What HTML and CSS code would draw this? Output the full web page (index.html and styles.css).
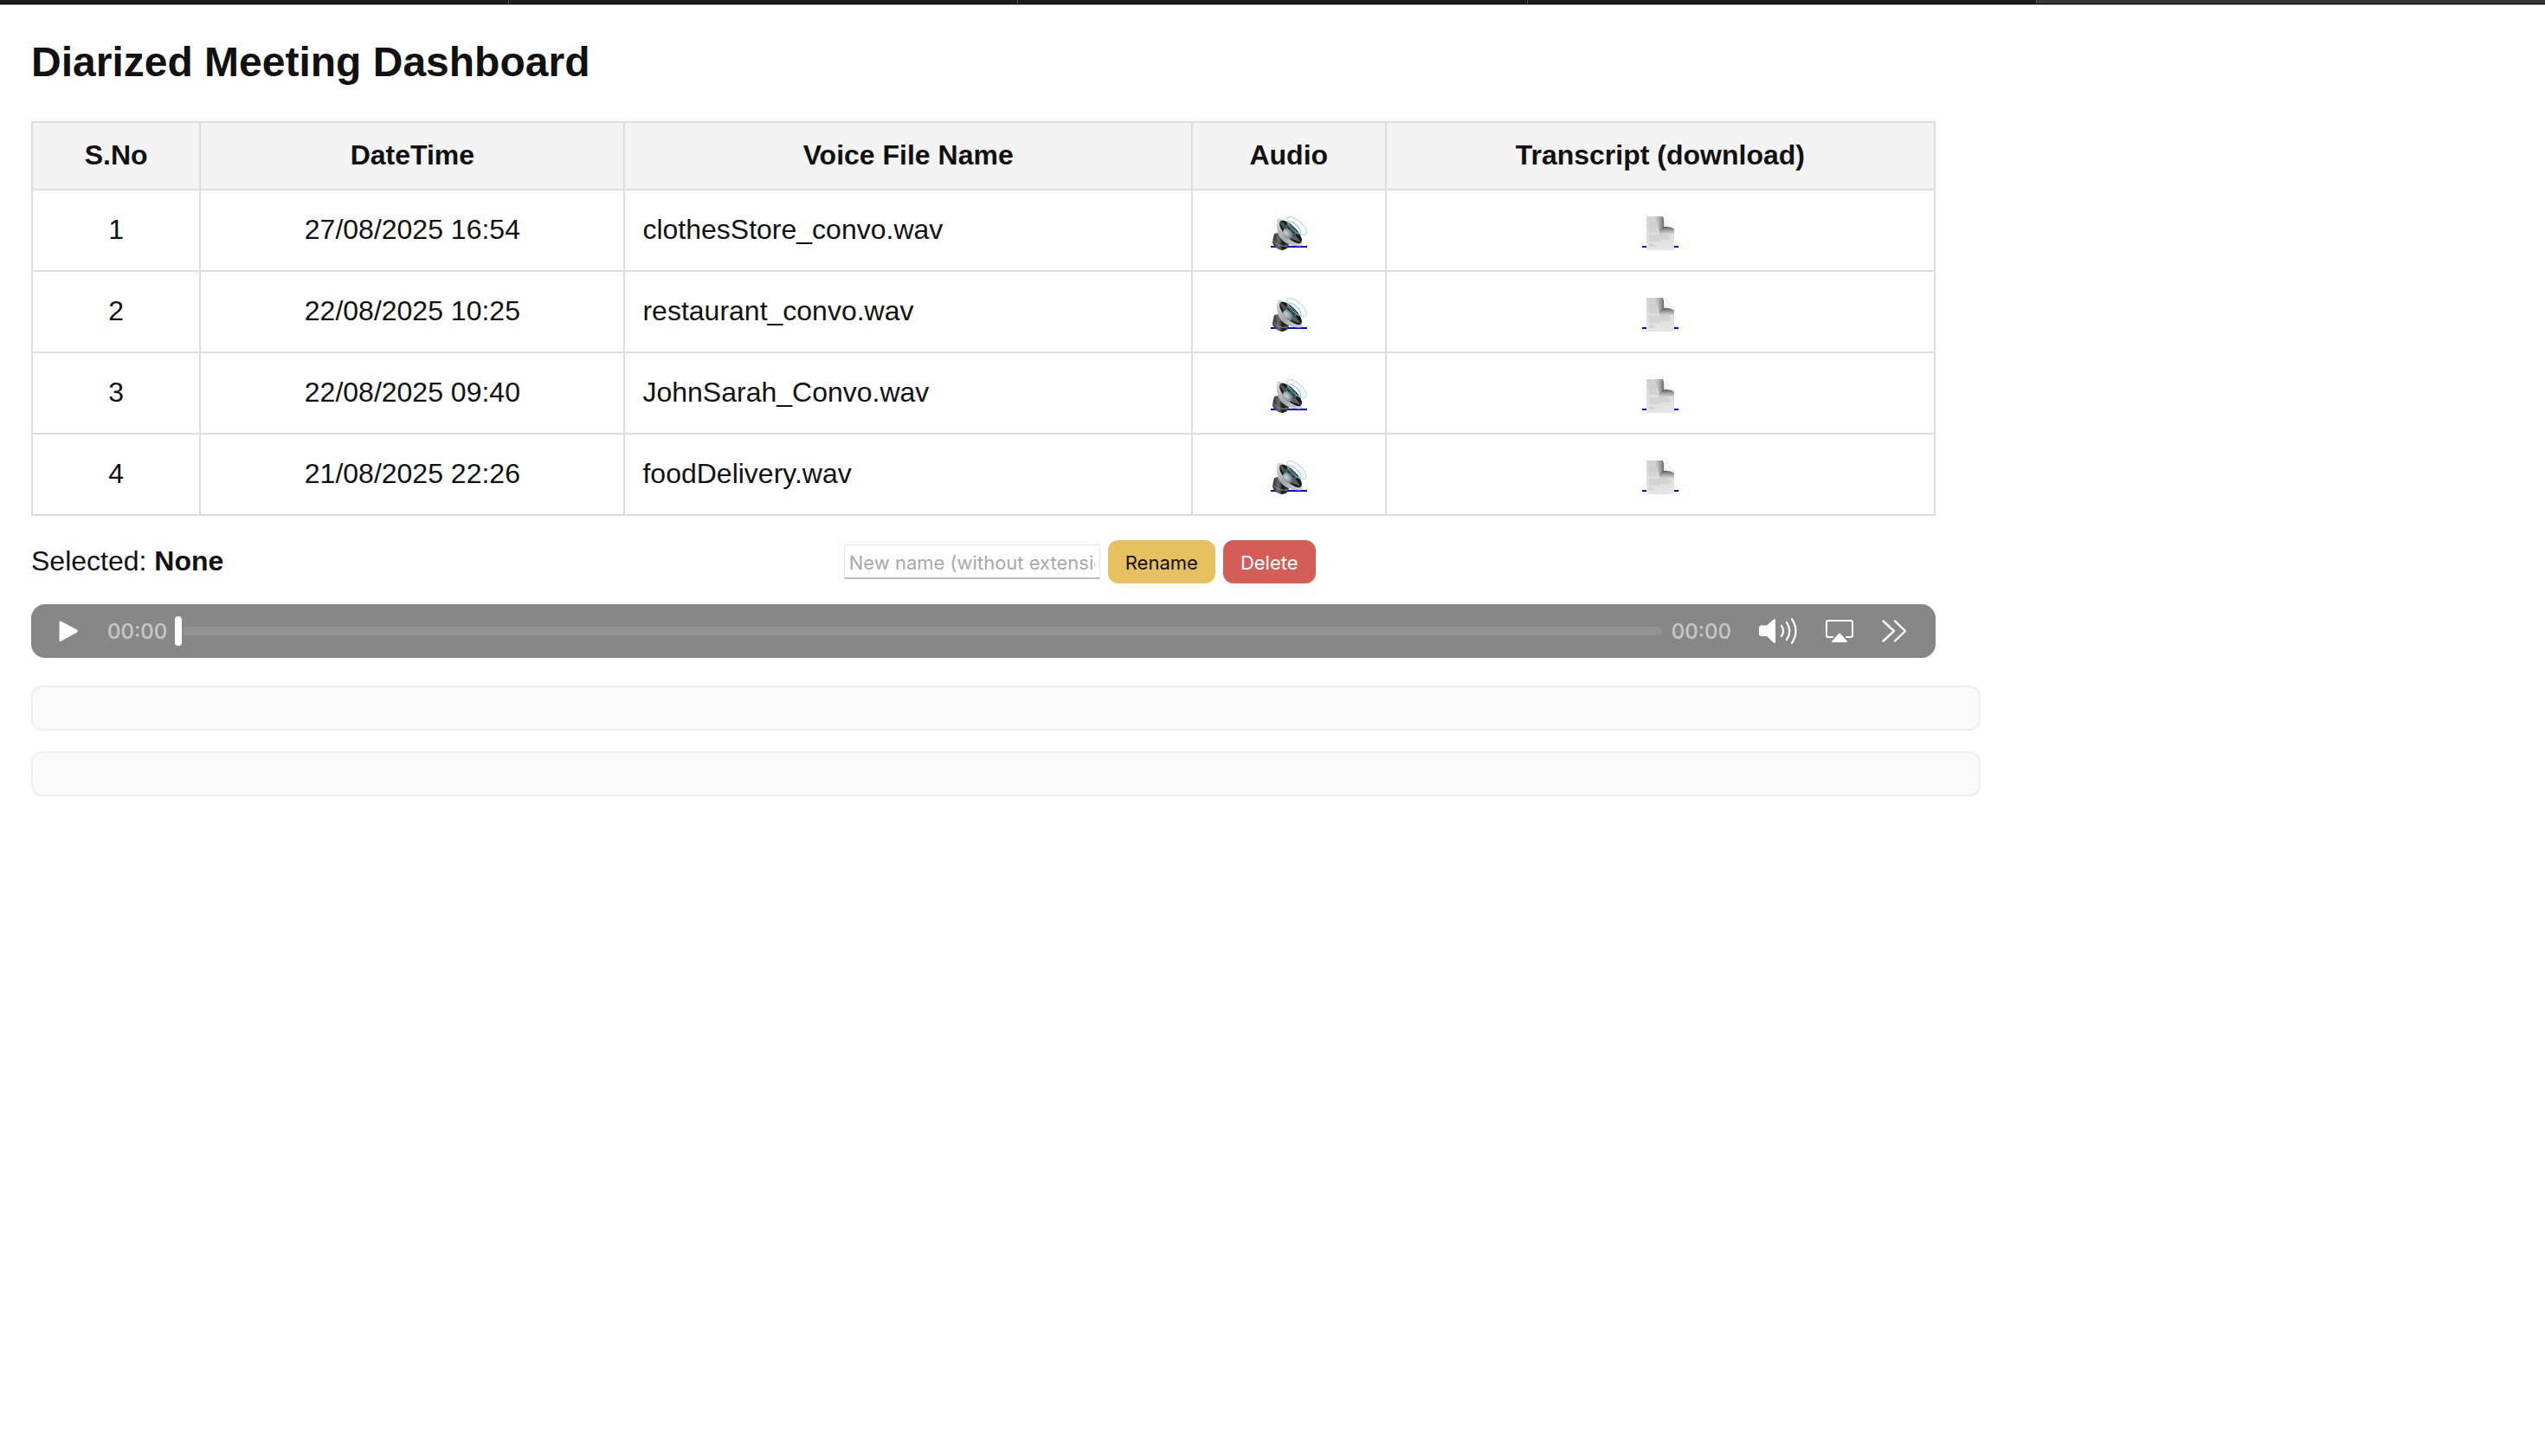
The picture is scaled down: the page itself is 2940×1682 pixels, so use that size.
FILE: index.html
```html
<!DOCTYPE html>
<html lang="en">
<head>
<meta charset="utf-8">
<title>Diarized Meeting Dashboard</title>
<link rel="stylesheet" href="styles.css">
</head>
<body>
<svg class="sprite" aria-hidden="true">
  <defs>
    <linearGradient id="rim" x1="0" y1="0" x2="1" y2="1">
      <stop offset="0" stop-color="#d8d8d8"/><stop offset=".5" stop-color="#a4a6a9"/><stop offset="1" stop-color="#d5d6da"/>
    </linearGradient>
    <linearGradient id="magnet" x1="0" y1="0" x2="1" y2="0">
      <stop offset="0" stop-color="#2a2a2a"/><stop offset=".35" stop-color="#6d6d6d"/><stop offset=".6" stop-color="#161616"/><stop offset="1" stop-color="#505050"/>
    </linearGradient>
    <radialGradient id="dome" cx=".35" cy=".6" r=".7">
      <stop offset="0" stop-color="#ccd5dc"/><stop offset=".6" stop-color="#8a959d"/><stop offset="1" stop-color="#50585e"/>
    </radialGradient>
    <linearGradient id="sheet" x1="0" y1="0" x2="0" y2="1">
      <stop offset="0" stop-color="#d2d2d2"/><stop offset=".5" stop-color="#dedede"/><stop offset="1" stop-color="#e6e6e6"/>
    </linearGradient>
    <linearGradient id="shade-left" x1="0" y1="0" x2="1" y2="0">
      <stop offset="0" stop-color="#bbb" stop-opacity="0"/><stop offset="1" stop-color="#666"/>
    </linearGradient>
    <linearGradient id="shade-down" x1="0" y1="0" x2="0" y2="1">
      <stop offset="0" stop-color="#555"/><stop offset="1" stop-color="#bbb" stop-opacity="0"/>
    </linearGradient>
    <linearGradient id="curl" x1="0" y1="1" x2="1" y2="0">
      <stop offset="0" stop-color="#d0d0d0"/><stop offset=".4" stop-color="#fafafa"/><stop offset="1" stop-color="#ddd"/>
    </linearGradient>
  </defs>
  <symbol id="speaker" viewBox="0 0 42 42">
    <path d="M4 21 L2 30 C2 35 8 40 14 40 L19 38 L22 31 L12 19Z" fill="url(#magnet)"/>
    <path d="M2 28 C6 34 12 36 19 35" fill="none" stroke="#999" stroke-width="1"/>
    <path d="M8 4 C5 12 8 22 12 27 C17 33 29 37 36 35 C38 30 32 21 26 15 C20 9 12 2 8 4Z" fill="url(#rim)"/>
    <ellipse cx="23" cy="19" rx="17" ry="7" transform="rotate(46 23 19)" fill="#17191a"/>
    <path d="M10 8 L16 17 L20 14 L13 7Z" fill="#4d5053"/>
    <path d="M21 26 L35 31 L28 22Z" fill="#5a5e62"/>
    <ellipse cx="20" cy="21" rx="7" ry="5" transform="rotate(45 20 21)" fill="url(#dome)"/>
    <ellipse cx="24" cy="16" rx="7" ry="3" transform="rotate(45 24 16)" fill="none" stroke="#4f8f98" stroke-width="1"/>
    <ellipse cx="27" cy="14" rx="10" ry="4" transform="rotate(42 27 14)" fill="none" stroke="#5aaab4" stroke-width="1" opacity=".7"/>
    <ellipse cx="30" cy="12" rx="14" ry="6" transform="rotate(42 30 12)" fill="none" stroke="#8fd3dc" stroke-width="1" opacity=".8"/>
  </symbol>
  <symbol id="page" viewBox="0 0 42 42">
    <path d="M5 1 H24 C28 5 33 10 37 14 V40 H5Z" fill="url(#sheet)"/>
    <path d="M8 4h5M8 8h9M8 10h9M8 12h9M8 14h10M8 16h9M8 18h10M8 23h23M8 25h25M8 27h23M8 29h13M8 33h5M8 35h8" stroke="#c8c8c8" stroke-width="1"/>
    <path d="M13 1 H24 C26 5 25 9 25 14 L20 19 C18 12 17 5 13 1Z" fill="url(#shade-left)"/>
    <path d="M25 13 C29 13 34 13 37 16 V21 C30 20 25 24 20 24 V18Z" fill="url(#shade-down)"/>
    <path d="M24 1 C26 5 25 9 25 13 C29 12 34 13 37 15 C36 10 29 3 24 1Z" fill="url(#curl)"/>
  </symbol>
</svg>

<div class="tab-strip" aria-hidden="true"><i></i><i></i><i></i><i></i><i></i></div>

<main class="page">
  <h1 class="title">Diarized Meeting Dashboard</h1>

  <table class="meetings">
    <colgroup><col class="col-no"><col class="col-date"><col class="col-name"><col class="col-audio"><col></colgroup>
    <thead>
      <tr><th>S.No</th><th>DateTime</th><th>Voice File Name</th><th>Audio</th><th>Transcript (download)</th></tr>
    </thead>
    <tbody>
      <tr><td>1</td><td>27/08/2025 16:54</td><td class="name">clothesStore_convo.wav</td>
        <td><a class="icon-link" href="#player" aria-label="Play clothesStore_convo.wav"><svg><use href="#speaker"/></svg></a></td>
        <td><a class="icon-link" href="#transcript" aria-label="Transcript of clothesStore_convo.wav"><svg><use href="#page"/></svg></a></td></tr>
      <tr><td>2</td><td>22/08/2025 10:25</td><td class="name">restaurant_convo.wav</td>
        <td><a class="icon-link" href="#player" aria-label="Play restaurant_convo.wav"><svg><use href="#speaker"/></svg></a></td>
        <td><a class="icon-link" href="#transcript" aria-label="Transcript of restaurant_convo.wav"><svg><use href="#page"/></svg></a></td></tr>
      <tr><td>3</td><td>22/08/2025 09:40</td><td class="name">JohnSarah_Convo.wav</td>
        <td><a class="icon-link" href="#player" aria-label="Play JohnSarah_Convo.wav"><svg><use href="#speaker"/></svg></a></td>
        <td><a class="icon-link" href="#transcript" aria-label="Transcript of JohnSarah_Convo.wav"><svg><use href="#page"/></svg></a></td></tr>
      <tr><td>4</td><td>21/08/2025 22:26</td><td class="name">foodDelivery.wav</td>
        <td><a class="icon-link" href="#player" aria-label="Play foodDelivery.wav"><svg><use href="#speaker"/></svg></a></td>
        <td><a class="icon-link" href="#transcript" aria-label="Transcript of foodDelivery.wav"><svg><use href="#page"/></svg></a></td></tr>
    </tbody>
  </table>

  <div class="toolbar">
    <div class="selected">Selected: <strong>None</strong></div>
    <form class="actions">
      <input class="new-name" type="text" placeholder="New name (without extension)" aria-label="New name">
      <button class="btn btn-rename" type="button">Rename</button>
      <button class="btn btn-delete" type="button">Delete</button>
    </form>
    <span class="status"></span>
  </div>

  <div class="player" id="player">
    <button class="ctl" type="button" aria-label="Play"><svg width="22" height="24" viewBox="0 0 22 24"><path d="M1 1 L2 1 L21 11 Q22 12 21 13 L2 23.500 L1 23.500Z" fill="#fff" stroke="#fff" stroke-width="1" stroke-linejoin="round"/></svg></button>
    <span class="time elapsed">00:00</span>
    <input class="seek" type="range" min="0" max="100" value="0" aria-label="Seek">
    <span class="time">00:00</span>
    <div class="extras">
      <button class="ctl" type="button" aria-label="Volume"><svg width="44" height="30" viewBox="0 0 44 30"><path d="M3 8.500 H9 L17 1.500 Q19 0.500 19 2.500 V27.500 Q19 29.500 17 28.500 L9 21 H3 Q0 21 0 18 V11.500 Q0 8.500 3 8.500Z" fill="#fff"/><path d="M26 9 Q30 15 26 21 M32 5 Q38.500 15 32 25 M38 1.200 Q47 15 38 28.800" fill="none" stroke="#fff" stroke-width="2.200" stroke-linecap="round"/></svg></button>
      <button class="ctl" type="button" aria-label="AirPlay"><svg width="32" height="26" viewBox="0 0 32 26"><path d="M8 20 H3 Q1 20 1 18 V3 Q1 1 3 1 H29 Q31 1 31 3 V18 Q31 20 29 20 H24" fill="none" stroke="#fff" stroke-width="2" stroke-linecap="round"/><path d="M15 16 Q16 15 17 16 L25 25 Q25 26 24 26 H8 Q7 26 7 25Z" fill="#fff"/></svg></button>
      <button class="ctl" type="button" aria-label="Playback speed"><svg width="28" height="26" viewBox="0 0 28 26"><path d="M1.500 1.500 L14 13 L1.500 24.500 M15 1.500 L27 13 L15 24.500" fill="none" stroke="#fff" stroke-width="2.400" stroke-linecap="round" stroke-linejoin="round"/></svg></button>
    </div>
  </div>

  <section class="panel" id="transcript" aria-label="Transcript"></section>
  <section class="panel" aria-label="Summary"></section>
</main>
</body>
</html>
```
FILE: styles.css
```css
* { box-sizing: border-box; }

body {
  margin: 0;
  background: #fff;
  color: #111;
  font: 32px/36px "Liberation Sans", Arial, sans-serif;
}

.sprite { position: absolute; width: 0; height: 0; }

/* window edge above the page */
.tab-strip {
  display: flex;
  height: 6px;
  background: #1d1d1d;
  border-bottom: 1px solid #aaa;
  box-shadow: inset 0 -1px #000;
}
.tab-strip i { flex: 1 0 0; border-right: 1px solid #555; margin-bottom: 1px; }
.tab-strip i:last-child { background: #383735; border-right: 0; }

.page { padding: 38px 36px; }

.title {
  margin: 0 0 40px;
  font-size: 48px;
  line-height: 56px;
}

.meetings {
  width: 100%;
  max-width: 2200px;
  table-layout: fixed;
  border-collapse: collapse;
}
.meetings th,
.meetings td {
  height: 94px;
  padding: 18px 20px 20px;
  border: 2px solid #ddd;
  text-align: center;
}
.meetings th { height: 78px; background: #f4f4f4; }
.meetings .name { text-align: left; }
.col-no { width: 8.84%; }
.col-date { width: 22.3%; }
.col-name { width: 29.82%; }
.col-audio { width: 10.18%; }

.icon-link {
  display: inline-block;
  height: 42px;
  margin-top: 9px;
  vertical-align: middle;
  background: linear-gradient(#00e, #00e) 0 35px / 100% 2px no-repeat;
}
.icon-link svg { display: block; width: 42px; height: 42px; }

.toolbar {
  display: flex;
  justify-content: space-between;
  align-items: center;
  max-width: 2200px;
  margin-top: 28px;
}
.selected { padding-bottom: 2px; }
.actions { display: flex; align-items: center; gap: 9px; }

.new-name {
  width: 296px;
  height: 40px;
  padding: 2px 5px 0;
  border: 1px solid #e6e6e6;
  border-bottom: 2px solid #bbb;
  background: #fff;
  font: 22px/28px Inter, sans-serif;
}
.new-name::placeholder { color: #a9a9a9; opacity: 1; }

.btn {
  height: 50px;
  padding: 2px 20px 0;
  border: 0;
  border-radius: 12px;
  font: 22px/28px Inter, sans-serif;
}
.btn-rename { background: #e7c15f; color: #111; }
.btn-delete { background: #d45d58; color: #fff; }

.player {
  display: flex;
  align-items: center;
  max-width: 2200px;
  height: 62px;
  margin-top: 24px;
  padding: 0 34px 0 32px;
  border-radius: 16px;
  background: #878787;
}
.ctl { padding: 0; border: 0; background: none; }
.ctl svg { display: block; }
.time { padding-top: 2px; color: #c8c8c8; font: 500 24px/28px Inter, sans-serif; }
.elapsed { margin-left: 34px; }
.extras { display: flex; align-items: center; gap: 33px; margin-left: 32px; }

.seek {
  flex: 1;
  min-width: 0;
  height: 34px;
  margin: 0 11px 0 9px;
  appearance: none;
  background: none;
}
.seek::-webkit-slider-runnable-track {
  height: 10px;
  border-radius: 5px;
  background: #939393;
}
.seek::-webkit-slider-thumb {
  appearance: none;
  width: 8px;
  height: 34px;
  margin-top: -12px;
  border-radius: 4px;
  background: #fff;
  box-shadow: 0 0 0 2px #878787;
}

.panel {
  box-sizing: content-box;
  max-width: 2200px;
  margin-top: 24px;
  padding: 24px;
  border: 2px solid #eee;
  border-radius: 12px;
  background: #fafafa;
}
.player + .panel { margin-top: 32px; }
```
